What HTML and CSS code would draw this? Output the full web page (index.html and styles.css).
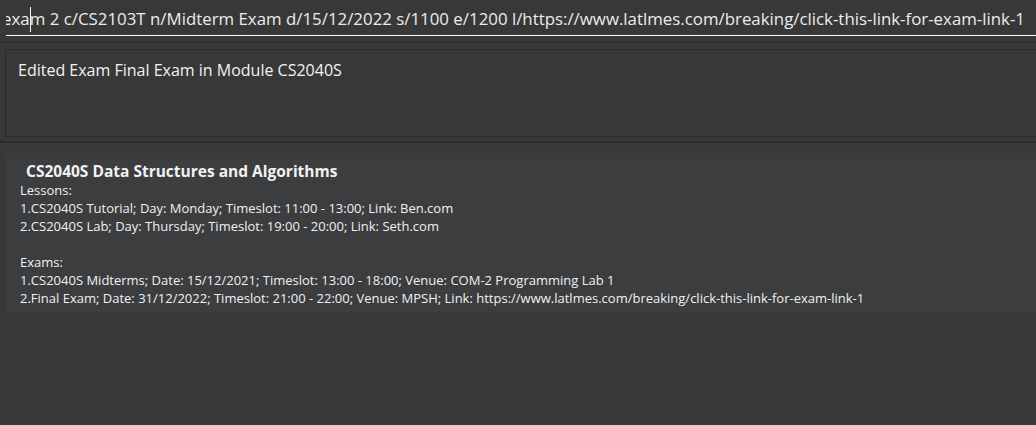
FILE: index.html
```html
<!DOCTYPE html>
<html>
<head>
<meta charset="utf-8">
<link rel="stylesheet" href="styles.css">
</head>
<body>
<div class="app">
  <div class="command">
    <div class="command-text">exa<span class="caret"></span>m 2 c/CS2103T n/Midterm Exam d/15/12/2022 s/1100 e/1200 l/https://www.latlmes.com/breaking/click-this-link-for-exam-link-1</div>
  </div>
  <div class="divider"></div>
  <div class="result-pane">
    <div class="result-box">Edited Exam Final Exam in Module CS2040S</div>
  </div>
  <div class="divider thick"></div>
  <div class="list-pane">
    <div class="card">
      <div class="card-title">CS2040S Data Structures and Algorithms</div>
      <div class="card-line">Lessons:</div>
      <div class="card-line">1.CS2040S Tutorial; Day: Monday; Timeslot: 11:00 - 13:00; Link: Ben.com</div>
      <div class="card-line">2.CS2040S Lab; Day: Thursday; Timeslot: 19:00 - 20:00; Link: Seth.com</div>
      <div class="card-line empty"></div>
      <div class="card-line">Exams:</div>
      <div class="card-line">1.CS2040S Midterms; Date: 15/12/2021; Timeslot: 13:00 - 18:00; Venue: COM-2 Programming Lab 1</div>
      <div class="card-line">2.Final Exam; Date: 31/12/2022; Timeslot: 21:00 - 22:00; Venue: MPSH; Link: https://www.latlmes.com/breaking/click-this-link-for-exam-link-1</div>
    </div>
  </div>
</div>
</body>
</html>
```
FILE: styles.css
```css
html, body {
  margin: 0;
  padding: 0;
  background: #383838;
  height: 100%;
}
body {
  font-family: "Open Sans", "Noto Sans", sans-serif;
  color: #f0f0f0;
  overflow: hidden;
}
.app {
  display: flex;
  flex-direction: column;
}
.command {
  margin-left: 6px;
  border-bottom: 1px solid #ffffff;
  display: flex;
  justify-content: flex-end;
  align-items: center;
  overflow: hidden;
  padding-right: 11px;
  padding-top: 4px;
  box-sizing: border-box;
  height: 36px;
}
.command-text {
  white-space: nowrap;
  font-size: 16.85px;
  color: #ececec;
  flex: none;
}
.caret {
  display: inline-block;
  width: 0;
  height: 25px;
  border-left: 1px solid #f4f4f4;
  margin-right: -1px;
  vertical-align: -7px;
}
.divider {
  margin-top: 6px;
  height: 1px;
  background: #2b2b2b;
}
.divider.thick {
  margin-top: 4px;
  height: 2px;
}
.result-pane {
  padding: 6px 0 0 5px;
}
.result-box {
  height: 88px;
  border: 1px solid #2a2a2a;
  border-right: none;
  padding: 9px 12px;
  font-size: 16px;
  color: #f2f2f2;
  box-sizing: border-box;
  line-height: 22px;
}
.list-pane {
  padding: 10px 0 0 5px;
}
.card {
  background: #3c3d3f;
  height: 159px;
  box-sizing: border-box;
  padding: 8px 0 0 15px;
}
.card-title {
  font-weight: bold;
  font-size: 15.5px;
  line-height: 20px;
  padding-left: 6px;
  color: #f2f2f2;
}
.card-line {
  font-size: 13px;
  line-height: 18px;
  height: 18px;
  white-space: nowrap;
  color: #f0f0f0;
}
```
